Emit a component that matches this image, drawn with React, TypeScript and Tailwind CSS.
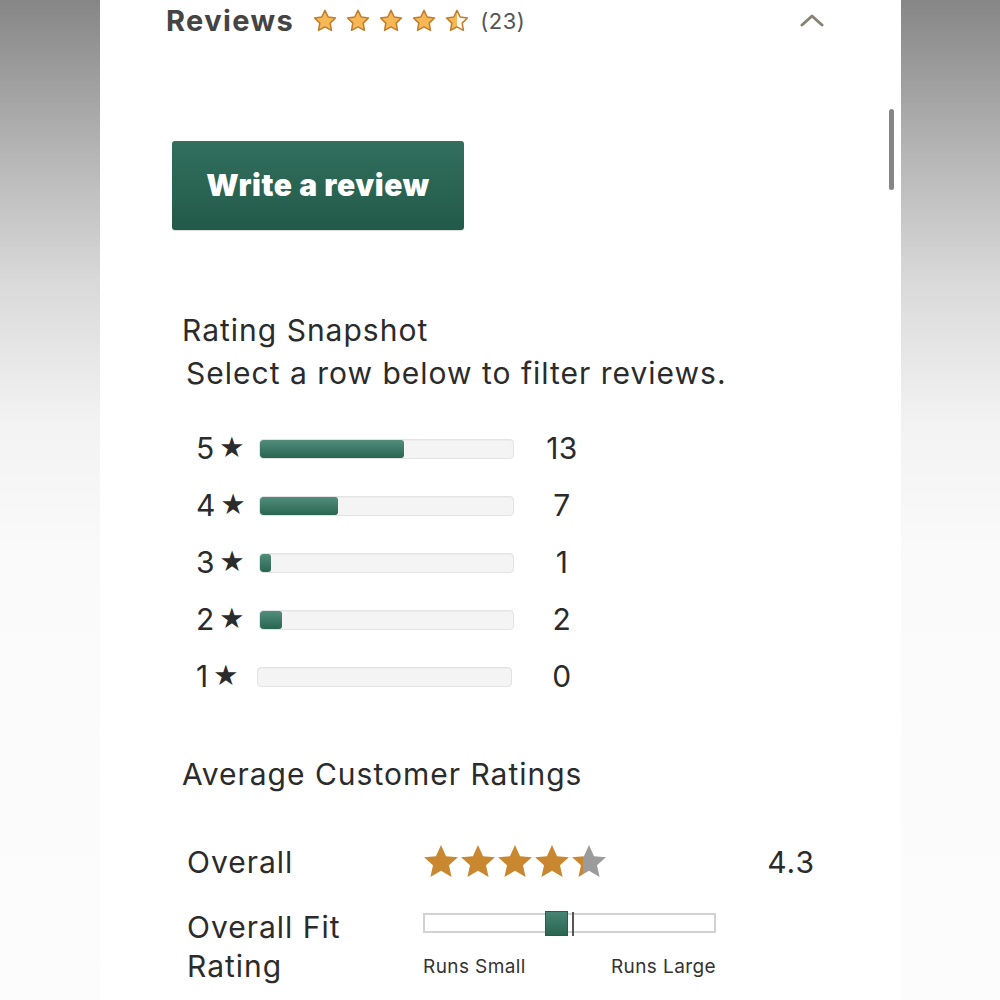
import React from "react";

const STAR = "M12 2.2l2.95 6.1 6.7.95-4.85 4.7 1.15 6.65L12 17.45 6.05 20.6 7.2 13.95 2.35 9.25l6.7-.95L12 2.2z";

function OutlineStar({ half = false, id }: { half?: boolean; id: string }) {
  return (
    <svg width="26" height="26" viewBox="0 0 24 24">
      {half && (
        <defs>
          <linearGradient id={id} x1="0" x2="1" y1="0" y2="0">
            <stop offset="50%" stopColor="#f5b855" />
            <stop offset="50%" stopColor="#fbf8f2" />
          </linearGradient>
        </defs>
      )}
      <path d={STAR} fill={half ? `url(#${id})` : "#f5b855"} stroke="#c17c2c" strokeWidth="1.4" strokeLinejoin="round" />
    </svg>
  );
}

function SolidStar({ frac = 1, id }: { frac?: number; id: string }) {
  return (
    <svg width="38" height="38" viewBox="0 0 24 24" className="-mx-[0.5px]">
      <defs>
        <linearGradient id={id} x1="0" x2="1" y1="0" y2="0">
          <stop offset={`${frac * 100}%`} stopColor="#c98830" />
          <stop offset={`${frac * 100}%`} stopColor="#9b9b9b" />
        </linearGradient>
      </defs>
      <path d="M12 1.3l3.2 7 7.5.75-5.65 5.05 1.65 7.4L12 17.6l-6.7 3.9 1.65-7.4L1.3 9.05l7.5-.75L12 1.3z" fill={`url(#${id})`} />
    </svg>
  );
}

const rows = [
  { s: 5, n: 13 },
  { s: 4, n: 7 },
  { s: 3, n: 1 },
  { s: 2, n: 2 },
  { s: 1, n: 0 },
];

export default function App() {
  const font = { fontFamily: "Inter, 'Noto Sans', sans-serif" };
  return (
    <div className="flex w-[1000px] h-[1000px] overflow-hidden bg-white" style={font}>
      <div className="w-[100px] h-full bg-[linear-gradient(to_bottom,#868686_0%,#b4b4b4_15%,#d9d9d9_28%,#f2f2f2_42%,#fafafa_55%,#fcfcfc_100%)]" />
      <div className="relative w-[801px] h-full bg-white">
        {/* header */}
        <div className="flex items-center h-[42px] pl-[66px] pr-[77px]">
          <span className="text-[29px] font-bold text-[#444] tracking-[1.4px]">Reviews</span>
          <div className="flex items-center gap-[7px] ml-[18px] mt-[-1px]">
            <OutlineStar id="h1" />
            <OutlineStar id="h2" />
            <OutlineStar id="h3" />
            <OutlineStar id="h4" />
            <OutlineStar id="h5" half />
          </div>
          <span className="ml-[10px] text-[22px] tracking-[0.5px] text-[#555]">(23)</span>
          <svg className="ml-auto mt-[-2px]" width="24" height="14" viewBox="0 0 24 14">
            <path d="M2 12L12 3l10 9" fill="none" stroke="#8a8273" strokeWidth="3" strokeLinecap="round" strokeLinejoin="round" />
          </svg>
        </div>

        {/* button */}
        <div className="ml-[72px] mt-[99px] w-[292px] h-[89px] rounded-[3px] bg-[linear-gradient(to_bottom,#326f5e,#225a49)] flex items-center justify-center shadow-[0_1px_1px_rgba(0,0,0,0.15)]">
          <span className="text-white font-black text-[30px] tracking-[0.6px]">Write a review</span>
        </div>

        {/* snapshot */}
        <div className="ml-[82px] mt-[80px] text-[30px] leading-[40px] tracking-[1px] text-[#2b2b2b]">Rating Snapshot</div>
        <div className="ml-[86px] mt-[3px] text-[30px] leading-[40px] tracking-[1px] text-[#2b2b2b]">Select a row below to filter reviews.</div>

        <div className="mt-[27px] ml-[96px] flex flex-col">
          {rows.map((r) => (
            <div key={r.s} className="flex items-center h-[57px]">
              <div className={`${r.s === 1 ? "w-[61px]" : "w-[63px]"} flex items-center text-[30px] tracking-[0.5px] text-[#2b2b2b]`}>
                <span>{r.s}</span>
                <span className="ml-[4px] text-[25px] leading-none">★</span>
              </div>
              <div className="w-[255px] h-[20px] rounded-[4px] bg-[#f4f4f4] border border-[#e3e3e3] overflow-hidden shadow-[inset_0_1px_1px_rgba(0,0,0,0.03)]">
                {r.n > 0 && (
                  <div
                    className="h-full rounded-[3px] bg-[linear-gradient(to_bottom,#528e7b,#2a6552)]"
                    style={{ width: `${Math.max((r.n / 23) * 255, 11)}px` }}
                  />
                )}
              </div>
              <div className={`${r.s === 1 ? "ml-[30px]" : "ml-[28px]"} w-[40px] text-center text-[30px] tracking-[0.5px] text-[#2b2b2b]`}>{r.n}</div>
            </div>
          ))}
        </div>

        <div className="ml-[82px] mt-[49px] text-[30px] leading-[40px] tracking-[1px] text-[#2b2b2b]">Average Customer Ratings</div>

        <div className="ml-[87px] mt-[46px] flex items-center h-[44px] pr-[86px]">
          <span className="w-[235px] text-[30px] tracking-[1px] text-[#2b2b2b]">Overall</span>
          <div className="flex items-center">
            <SolidStar id="o1" />
            <SolidStar id="o2" />
            <SolidStar id="o3" />
            <SolidStar id="o4" />
            <SolidStar id="o5" frac={0.32} />
          </div>
          <span className="ml-auto text-[30px] tracking-[1px] text-[#2b2b2b]">4.3</span>
        </div>

        <div className="ml-[87px] mt-[24px] flex">
          <div className="w-[236px] text-[30px] leading-[39px] tracking-[1px] text-[#2b2b2b]">
            Overall Fit
            <br />
            Rating
          </div>
          <div className="w-[293px] pt-[5px]">
            <div className="relative h-[20px] border-2 border-[#d2d2d2] bg-white">
              <div className="absolute left-[120px] top-[-4px] w-[23px] h-[25px] bg-[linear-gradient(to_bottom,#468571,#2a6552)] border border-[#2a5a4a]" />
              <div className="absolute left-[147px] top-[-3px] w-[2px] h-[24px] bg-[#555]" />
            </div>
            <div className="flex justify-between mt-[20px] text-[19px] tracking-[0.4px] text-[#333]">
              <span>Runs Small</span>
              <span>Runs Large</span>
            </div>
          </div>
        </div>

        {/* scrollbar */}
        <div className="absolute left-[789px] top-[109px] w-[5px] h-[81px] rounded-full bg-[#858585]" />
      </div>
      <div className="w-[99px] h-full bg-[linear-gradient(to_bottom,#868686_0%,#b4b4b4_15%,#d9d9d9_28%,#f2f2f2_42%,#fafafa_55%,#fcfcfc_100%)]" />
    </div>
  );
}
